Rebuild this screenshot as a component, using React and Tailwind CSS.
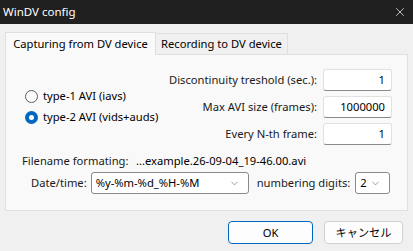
import { ChevronDown, X } from "lucide-react";

const font = { fontFamily: '"Noto Sans", "Noto Sans CJK JP", sans-serif' };

function NumField({ value }) {
  return (
    <div className="w-[69px] h-[22px] shrink-0 bg-white border border-[#e1e1e1] border-b-[#8a8a8a] rounded-[3px] flex items-center justify-end pr-[6px] text-black">
      {value}
    </div>
  );
}

function Combo({ value, width }) {
  return (
    <div
      className={`${width} h-[22px] shrink-0 bg-white border border-[#8a8a8a] rounded-[3px] flex items-center justify-between pl-[4px] pr-[8px] text-black`}
    >
      <span>{value}</span>
      <ChevronDown size={11} strokeWidth={1.3} className="text-[#5d5d5d]" />
    </div>
  );
}

export default function App() {
  return (
    <div className="w-[413px] h-[251px] bg-[#f0f0f0] text-[11.2px] leading-[16px] text-[#1a1a1a] flex flex-col whitespace-nowrap" style={font}>
      {/* Title bar */}
      <div className="h-[24px] shrink-0 bg-[#202020] text-white flex items-center justify-between pl-[3px] pr-[6px]">
        <span className="text-[11.5px]">WinDV config</span>
        <X size={14} strokeWidth={1.2} />
      </div>

      {/* Tabs */}
      <div className="flex items-end h-[30px] shrink-0 pl-[5px]">
        <div className="h-[23px] w-[151px] bg-[#f9f9f9] border border-b-0 border-[#e0e0e0] flex items-center justify-center text-black relative top-[1px] z-10">
          Capturing from DV device
        </div>
        <div className="h-[21px] w-[132px] bg-[#f0f0f0] border border-l-0 border-b-0 border-[#e0e0e0] flex items-center justify-center text-black">
          Recording to DV device
        </div>
      </div>

      {/* Panel */}
      <div className="mx-[5px] w-[403px] h-[157px] shrink-0 bg-[#f9f9f9] border border-[#e0e0e0] flex flex-col">
        <div className="flex pt-[14px] pr-[15px]">
          <div className="flex flex-col gap-[5px] pl-[19px] pt-[19px] w-[165px]">
            <label className="flex items-center gap-[5px] h-[16px] text-black">
              <span className="w-[13px] h-[13px] rounded-full border border-[#5d5d5d] bg-[#fbfbfb]" />
              type-1 AVI (iavs)
            </label>
            <label className="flex items-center gap-[5px] h-[16px] text-black">
              <span className="w-[13px] h-[13px] rounded-full bg-[#0067c0] flex items-center justify-center">
                <span className="w-[5px] h-[5px] rounded-full bg-white" />
              </span>
              type-2 AVI (vids+auds)
            </label>
          </div>
          <div className="flex flex-col gap-[5px] flex-1">
            <div className="flex items-center justify-end gap-[6px]">
              <span>Discontinuity treshold (sec.):</span>
              <NumField value="1" />
            </div>
            <div className="flex items-center justify-end gap-[6px]">
              <span>Max AVI size (frames):</span>
              <NumField value="1000000" />
            </div>
            <div className="flex items-center justify-end gap-[6px]">
              <span>Every N-th frame:</span>
              <NumField value="1" />
            </div>
          </div>
        </div>

        <div className="flex items-center pl-[16px] mt-[8px] h-[16px]">
          <span className="w-[114px]">Filename formating:</span>
          <span className="text-black">...example.26-09-04_19-46.00.avi</span>
        </div>

        <div className="flex items-center pl-[25px] mt-[3px]">
          <span className="mr-[4px]">Date/time:</span>
          <Combo value="%y-%m-%d_%H-%M" width="w-[158px]" />
          <span className="ml-[8px] mr-[5px]">numbering digits:</span>
          <Combo value="2" width="w-[35px]" />
        </div>
      </div>

      {/* Buttons */}
      <div className="flex justify-end gap-[11px] pr-[10px] mt-[10px]">
        <button className="w-[85px] h-[23px] bg-[#fdfdfd] border border-[#0067c0] rounded-[4px] text-black">
          OK
        </button>
        <button className="w-[79px] h-[23px] bg-[#fdfdfd] border border-[#d0d0d0] rounded-[4px] text-black">
          キャンセル
        </button>
      </div>
    </div>
  );
}
